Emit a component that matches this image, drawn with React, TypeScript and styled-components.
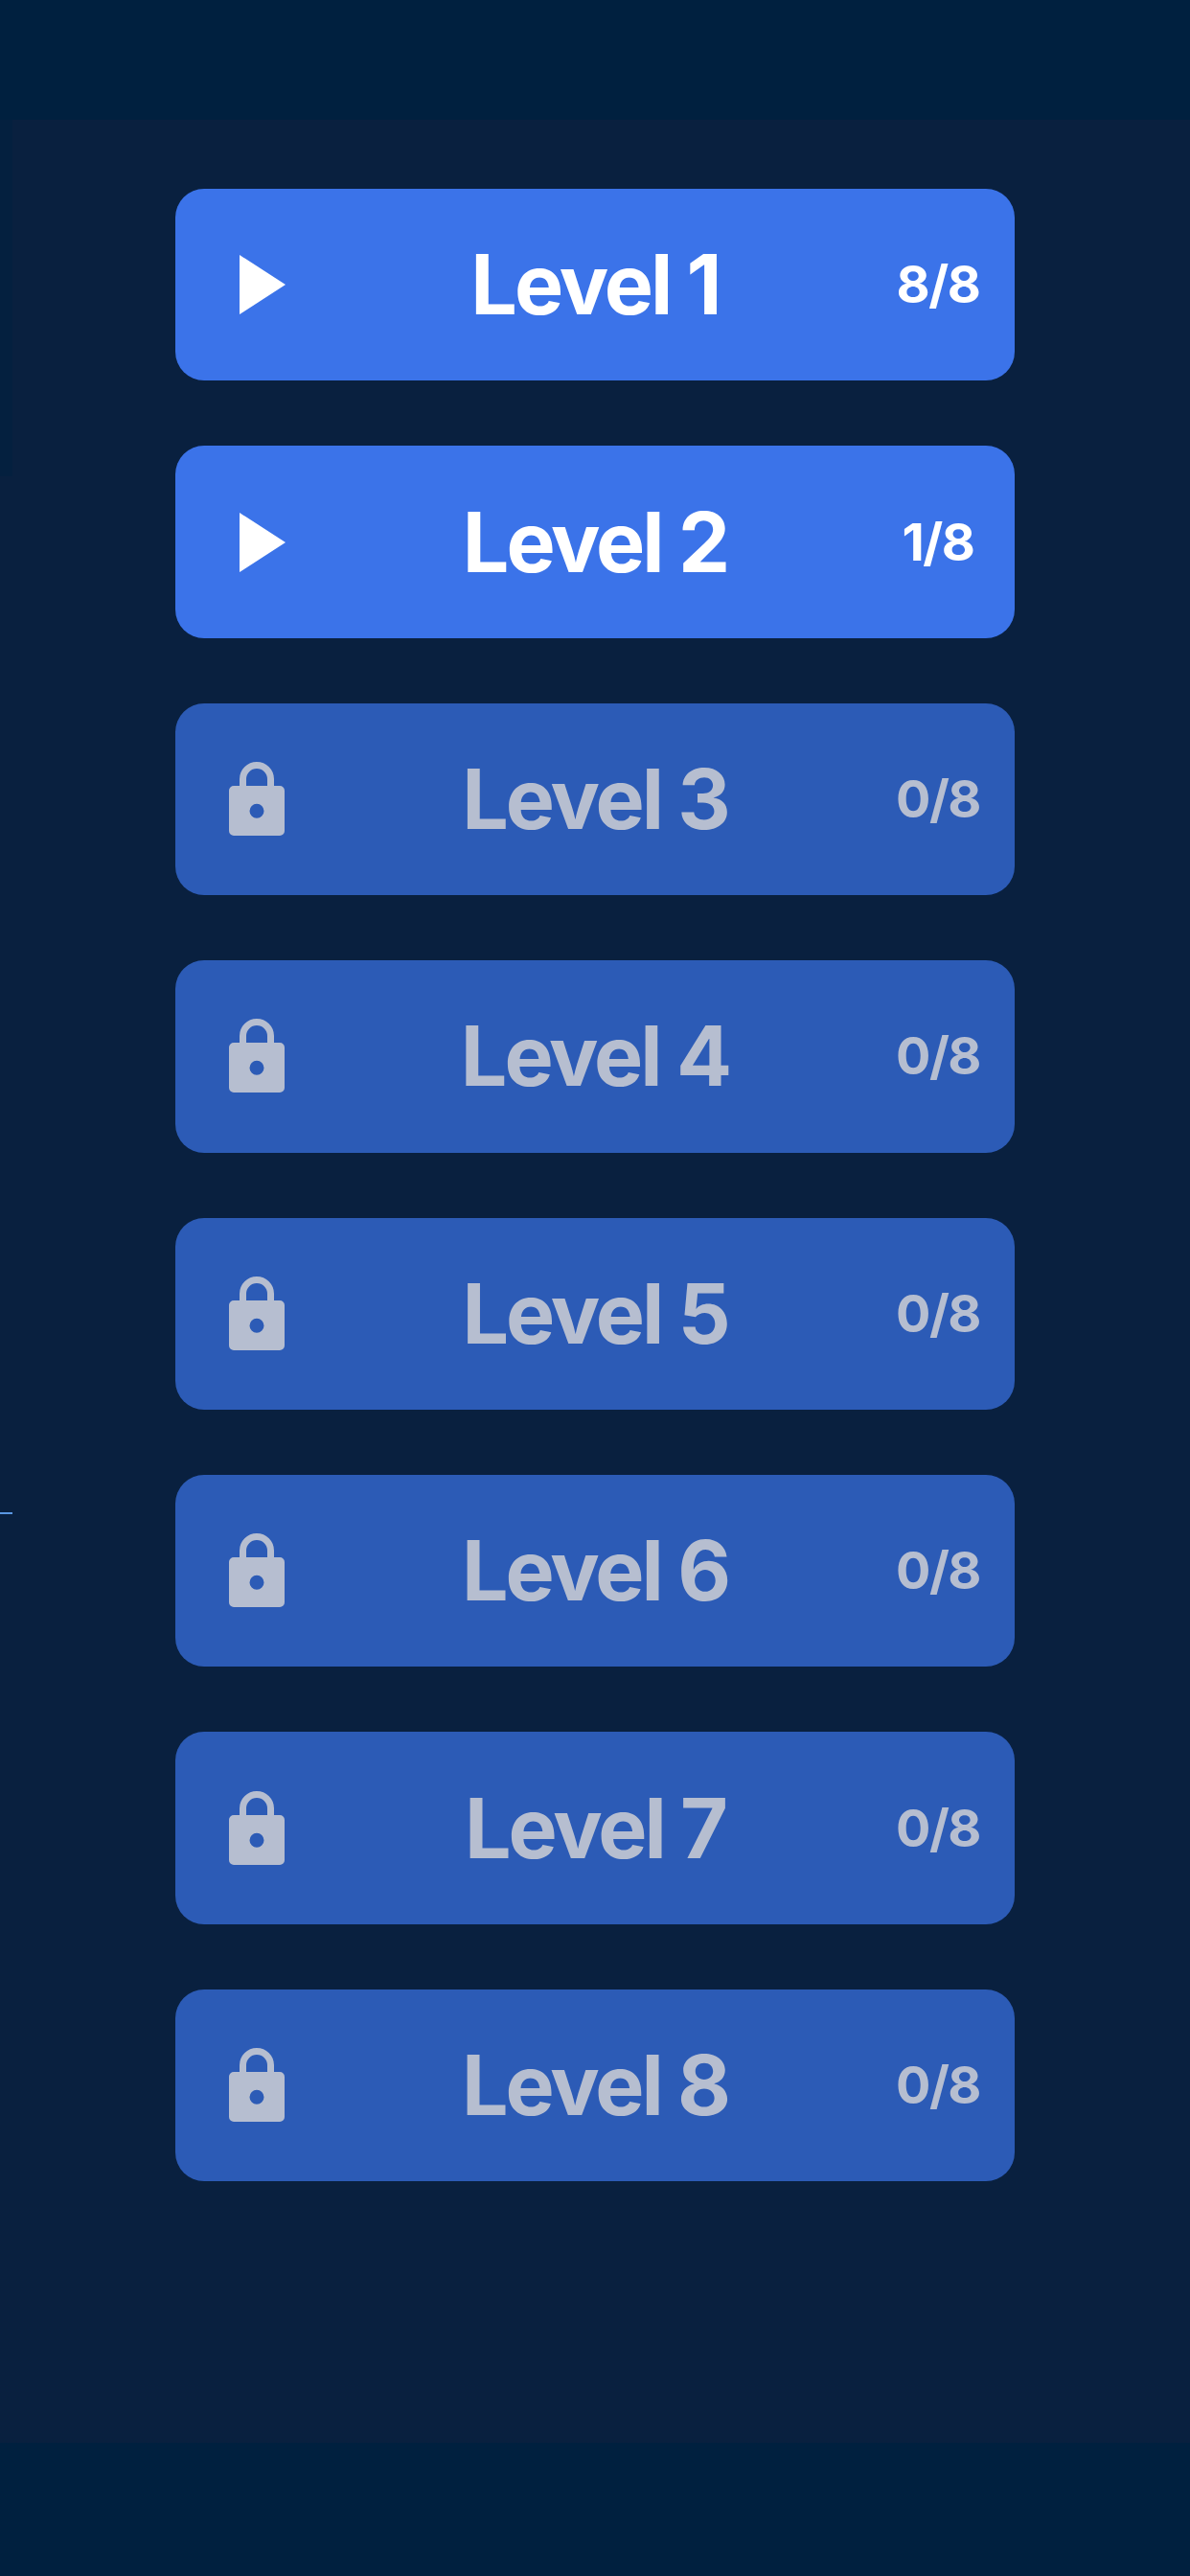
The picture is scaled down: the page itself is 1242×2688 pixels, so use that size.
import React from "react";
import styled, { createGlobalStyle } from "styled-components";

const Global = createGlobalStyle`
  html, body { margin: 0; padding: 0; background: #00203f; }
  body { font-family: Inter, "Liberation Sans", sans-serif; }
`;

const Screen = styled.div`
  position: relative;
  width: 1242px;
  height: 2688px;
  display: flex;
  flex-direction: column;
  background: #00203f;
  overflow: hidden;
`;

const Panel = styled.main`
  margin-top: 125px;
  height: 2424px;
  background: #09203f;
  display: flex;
  flex-direction: column;
  align-items: center;
  gap: 68px;
  padding-top: 72px;
  box-sizing: border-box;
`;

const EdgeStrip = styled.div`
  position: absolute;
  left: 0;
  top: 125px;
  width: 13px;
  height: 372px;
  background: #04203f;
`;

const EdgeTick = styled.div`
  position: absolute;
  left: 0;
  top: 1578px;
  width: 13px;
  height: 2px;
  background: #5a97e2;
`;

const Row = styled.div<{ $active: boolean }>`
  width: 876px;
  height: 200.4px;
  flex: none;
  border-radius: 30px;
  background: ${(p) => (p.$active ? "#3b73e9" : "#2c5bb6")};
  color: ${(p) => (p.$active ? "#ffffff" : "#b6bed0")};
  display: grid;
  grid-template-columns: 1fr auto 1fr;
  align-items: center;
`;

const IconSlot = styled.div`
  padding-left: 55px;
  display: flex;
  align-items: center;
`;

const Glyph = styled.svg`
  width: 62px;
  height: 80px;
  display: block;
  fill: currentColor;
`;

const Label = styled.div`
  font-size: 86px;
  font-weight: 700;
  line-height: 1;
  letter-spacing: -3px;
`;

const CountSlot = styled.div`
  justify-self: end;
  width: 120px;
  margin-right: 20px;
  text-align: center;
  font-size: 54px;
  font-weight: 700;
  line-height: 1;
  letter-spacing: -1.5px;
`;

const PlayIcon = () => (
  <Glyph viewBox="0 0 62 80">
    <path d="M12 9 L60 40 L12 71 Z" />
  </Glyph>
);

const LockIcon = () => (
  <Glyph viewBox="0 0 62 80">
    <path
      d="M15.5 28 V19 a14.5 14.5 0 0 1 29 0 V28"
      fill="none"
      stroke="currentColor"
      strokeWidth="7"
    />
    <path
      fillRule="evenodd"
      d="M6 26 H54 a5 5 0 0 1 5 5 V73 a5 5 0 0 1 -5 5 H6 a5 5 0 0 1 -5 -5 V31 a5 5 0 0 1 5 -5 Z M30 44.8 a7.5 7.5 0 1 0 0 15 a7.5 7.5 0 1 0 0 -15 Z"
    />
  </Glyph>
);

const levels = [
  { name: "Level 1", count: "8/8", active: true },
  { name: "Level 2", count: "1/8", active: true },
  { name: "Level 3", count: "0/8", active: false },
  { name: "Level 4", count: "0/8", active: false },
  { name: "Level 5", count: "0/8", active: false },
  { name: "Level 6", count: "0/8", active: false },
  { name: "Level 7", count: "0/8", active: false },
  { name: "Level 8", count: "0/8", active: false },
];

export default function App() {
  return (
    <Screen>
      <Global />
      <Panel>
        {levels.map((l) => (
          <Row key={l.name} $active={l.active}>
            <IconSlot>{l.active ? <PlayIcon /> : <LockIcon />}</IconSlot>
            <Label>{l.name}</Label>
            <CountSlot>{l.count}</CountSlot>
          </Row>
        ))}
      </Panel>
      <EdgeStrip />
      <EdgeTick />
    </Screen>
  );
}
